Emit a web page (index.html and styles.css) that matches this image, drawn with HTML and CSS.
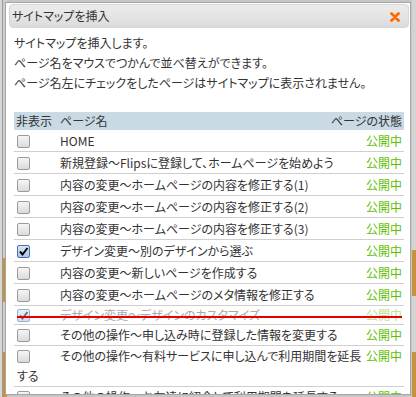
FILE: index.html
```html
<!DOCTYPE html>
<html lang="ja">
<head>
<meta charset="utf-8">
<title>サイトマップを挿入</title>
<link rel="stylesheet" href="styles.css">
</head>
<body>
<div class="page">
  <div class="page-edge page-edge--left"></div>
  <div class="page-edge page-edge--right"></div>
</div>
<div class="dialog">
  <div class="titlebar">
    <span class="title">サイトマップを挿入</span>
    <svg class="close" width="10" height="10" viewBox="0 0 10 10"><path d="M1.5 1.5 L8.5 8.5 M8.5 1.5 L1.5 8.5" stroke="#ff6a00" stroke-width="2.8" stroke-linecap="round"/></svg>
  </div>
  <div class="content">
    <p class="intro">サイトマップを挿入します。<br>ページ名をマウスでつかんで並べ替えができます。<br>ページ名左にチェックをしたページはサイトマップに表示されません。</p>
    <div class="list">
      <div class="list-head"><span class="h-hide">非表示</span><span class="h-name">ページ名</span><span class="h-status">ページの状態</span></div>
      <div class="row"><span class="status">公開中</span><span class="cb"></span><span class="name">HOME</span></div>
      <div class="row"><span class="status">公開中</span><span class="cb"></span><span class="name">新規登録〜Flipsに登録して、ホームページを始めよう</span></div>
      <div class="row"><span class="status">公開中</span><span class="cb"></span><span class="name">内容の変更〜ホームページの内容を修正する(1)</span></div>
      <div class="row"><span class="status">公開中</span><span class="cb"></span><span class="name">内容の変更〜ホームページの内容を修正する(2)</span></div>
      <div class="row"><span class="status">公開中</span><span class="cb"></span><span class="name">内容の変更〜ホームページの内容を修正する(3)</span></div>
      <div class="row"><span class="status">公開中</span><span class="cb cb--checked"><svg width="13" height="13" viewBox="0 0 13 13"><path d="M3 6.5 L5.5 9.5 L10.5 3" stroke="#000" stroke-width="2" fill="none"/></svg></span><span class="name">デザイン変更〜別のデザインから選ぶ</span></div>
      <div class="row"><span class="status">公開中</span><span class="cb"></span><span class="name">内容の変更〜新しいページを作成する</span></div>
      <div class="row"><span class="status">公開中</span><span class="cb"></span><span class="name">内容の変更〜ホームページのメタ情報を修正する</span></div>
      <div class="row row--drag"><span class="status">公開中</span><span class="cb cb--checked"><svg width="13" height="13" viewBox="0 0 13 13"><path d="M3 6.5 L5.5 9.5 L10.5 3" stroke="#000" stroke-width="2" fill="none"/></svg></span><span class="name">デザイン変更〜デザインのカスタマイズ</span><span class="drop-line"></span></div>
      <div class="row row--tight"><span class="status">公開中</span><span class="cb"></span><span class="name">その他の操作〜申し込み時に登録した情報を変更する</span></div>
      <div class="row row--tight"><span class="status">公開中</span><span class="cb"></span><span class="name">その他の操作〜有料サービスに申し込んで利用期間を延長する</span></div>
      <div class="row row--tight"><span class="status">公開中</span><span class="cb"></span><span class="name">その他の操作〜お友達に紹介して利用期間を延長する</span></div>
    </div>
  </div>
</div>
</body>
</html>
```

FILE: styles.css
```css
html, body {
  margin: 0;
  padding: 0;
}
body {
  width: 416px;
  height: 397px;
  overflow: hidden;
  background: #c6c6c6;
  font-family: "Noto Sans CJK JP", "Liberation Sans", sans-serif;
  font-size: 12px;
  color: #333;
  font-feature-settings: "palt";
}
.page {
  position: relative;
  height: 397px;
  display: flex;
  justify-content: space-between;
}
.page-edge {
  width: 5px;
  height: 100%;
  background: linear-gradient(to bottom, #cfcfcf 0 258px, #c8913f 258px 302px, #cfcfcf 302px 352px, #c8913f 352px);
}
.page-edge--left {
  border-left: 2px solid #d8d8d8;
  box-shadow: inset 1px 0 0 #9a9a9a;
}
.page-edge--right {
  width: 4px;
  background: linear-gradient(to bottom, #d4d4d4 0 250px, #c8913f 250px 296px, #d4d4d4 296px 352px, #c8913f 352px);
}
.dialog {
  position: absolute;
  left: 5px;
  top: 2px;
  width: 404px;
  height: 393px;
  border: 1px solid #a6a6a6;
  background: #fff;
  padding: 1px 1px 0 3px;
  box-sizing: border-box;
  width: 406px;
  overflow: hidden;
}
.titlebar {
  height: 24px;
  box-sizing: border-box;
  border: 1px solid #d6d6d6;
  border-radius: 4px;
  background: linear-gradient(to bottom, #ececec, #dcdcdc);
  display: flex;
  align-items: center;
  justify-content: space-between;
  padding: 0 8px 0 2px;
}
.title {
  line-height: 20px;
  color: #333;
}
.close {
  display: block;
  margin-top: 1px;
}
.content {
  padding: 5px 5px 0 5px;
}
.intro {
  margin: 0 0 19px 0;
  line-height: 20px;
}
.list-head {
  display: flex;
  background: #c9dae4;
  line-height: 18px;
  height: 18px;
  padding: 0 2px;
}
.h-hide {
  width: 44px;
}
.h-name {
  flex: 1;
}
.row {
  position: relative;
  line-height: 21px;
  border-bottom: 1px solid #cfcfcf;
  padding: 0 2px 0 3px;
}
.row--tight {
  line-height: 20px;
}
.row--drag {
  line-height: 18px;
  color: #aaa;
}
.row--drag .status {
  color: #b8e08a;
}
.row--drag .cb {
  opacity: 0.55;
}
.status {
  float: right;
  color: #5cc000;
}
.cb {
  display: inline-block;
  vertical-align: -2px;
  width: 13px;
  height: 13px;
  box-sizing: border-box;
  border: 1px solid #9a9a9a;
  border-radius: 2px;
  background: linear-gradient(to bottom, #f6f6f6, #dadada);
  margin-right: 30px;
  position: relative;
}
.cb svg {
  position: absolute;
  left: -1px;
  top: -1px;
}
.cb--checked {
  border-color: #4c6fa8;
  background: linear-gradient(to bottom, #d6e6fa, #a9c6ee);
}
.drop-line {
  position: absolute;
  left: 3px;
  right: 2px;
  top: 10px;
  height: 2px;
  background: #e80000;
}
```
